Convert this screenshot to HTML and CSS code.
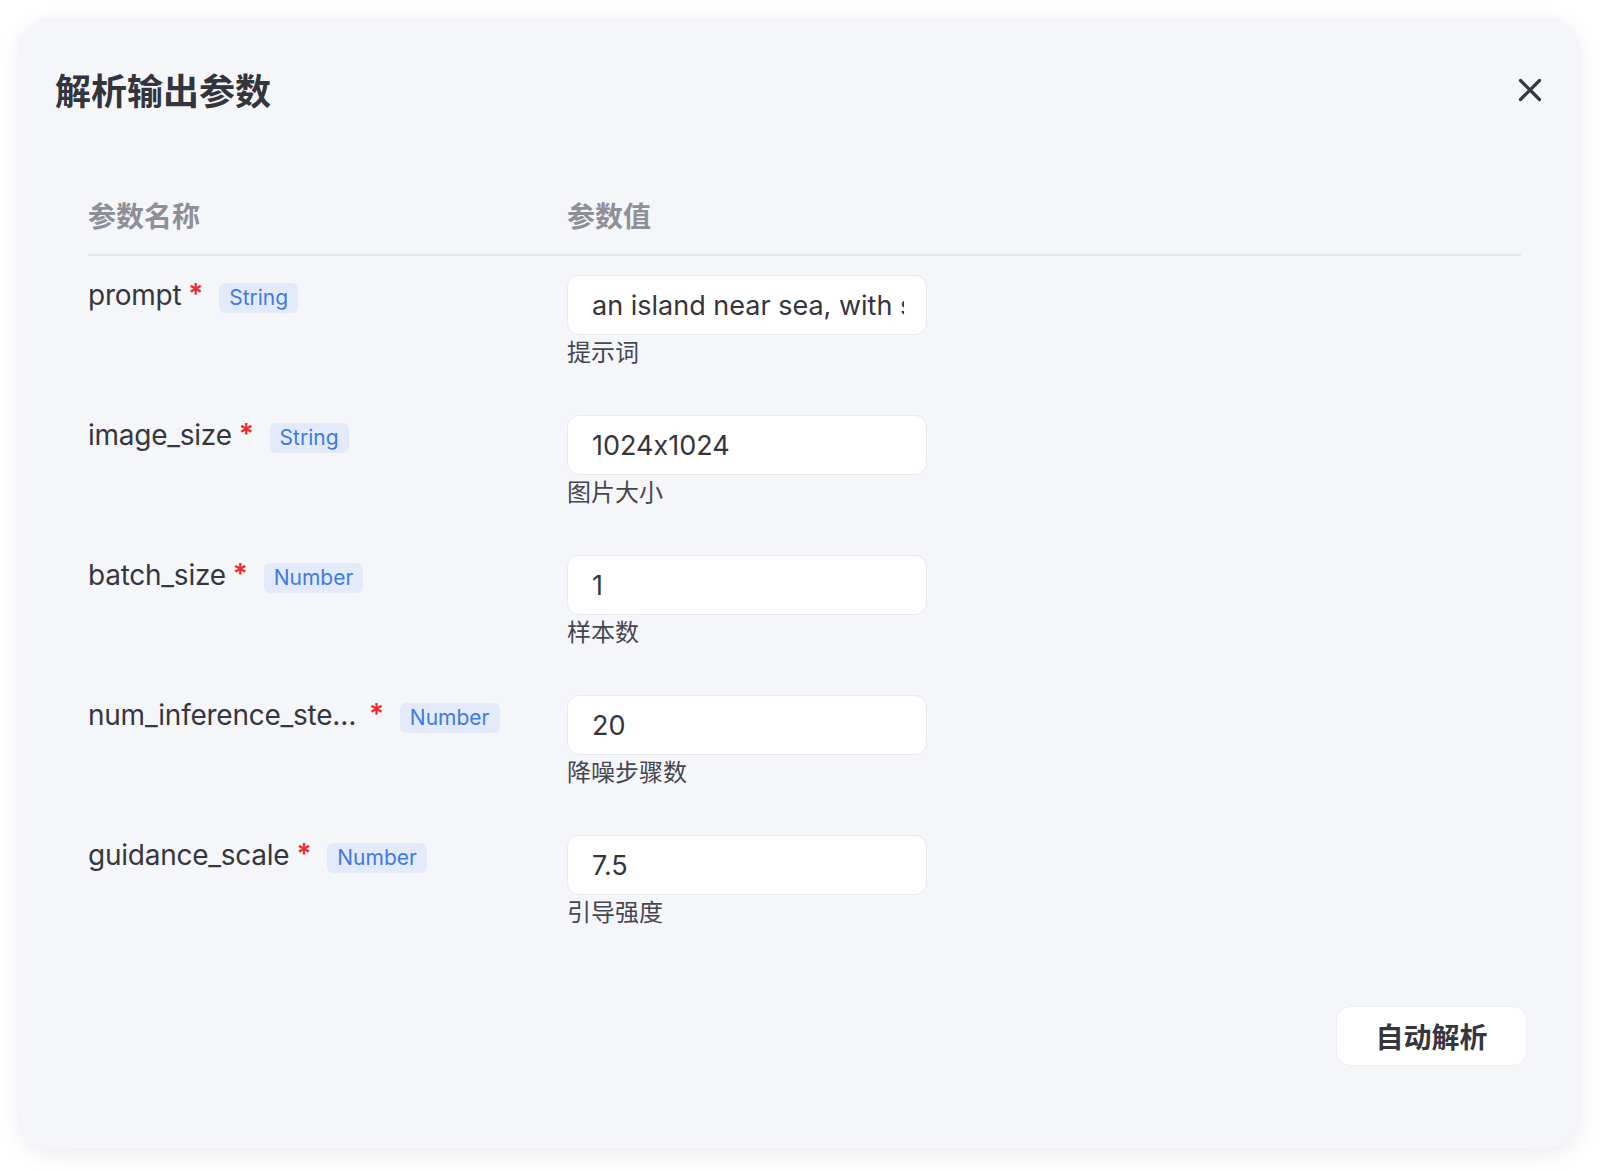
FILE: index.html
```html
<!DOCTYPE html>
<html lang="zh-CN">
<head>
<meta charset="utf-8">
<title>解析输出参数</title>
<link rel="stylesheet" href="styles.css">
</head>
<body>
<div class="page">
  <div class="dialog">
    <div class="dialog-head">
      <h1 class="dialog-title">解析输出参数</h1>
      <button class="close-btn" aria-label="关闭">
        <svg width="24" height="24" viewBox="0 0 24 24"><path d="M2.5 2.5 L21.5 21.5 M21.5 2.5 L2.5 21.5" fill="none" stroke="#383843" stroke-width="3.2" stroke-linecap="round"/></svg>
      </button>
    </div>

    <div class="table">
      <div class="thead">
        <div>参数名称</div>
        <div>参数值</div>
      </div>
      <div class="tbody">
        <div class="row">
          <div class="name-cell"><span class="name">prompt</span><span class="req">*</span><span class="tag">String</span></div>
          <div class="value-cell"><input class="field" value="an island near sea, with sky and clouds"><div class="hint">提示词</div></div>
        </div>
        <div class="row">
          <div class="name-cell"><span class="name">image_size</span><span class="req">*</span><span class="tag">String</span></div>
          <div class="value-cell"><input class="field" value="1024x1024"><div class="hint">图片大小</div></div>
        </div>
        <div class="row">
          <div class="name-cell"><span class="name">batch_size</span><span class="req">*</span><span class="tag">Number</span></div>
          <div class="value-cell"><input class="field" value="1"><div class="hint">样本数</div></div>
        </div>
        <div class="row">
          <div class="name-cell"><span class="name name-long">num_inference_steps</span><span class="req req-long">*</span><span class="tag">Number</span></div>
          <div class="value-cell"><input class="field" value="20"><div class="hint">降噪步骤数</div></div>
        </div>
        <div class="row">
          <div class="name-cell"><span class="name">guidance_scale</span><span class="req">*</span><span class="tag">Number</span></div>
          <div class="value-cell"><input class="field" value="7.5"><div class="hint">引导强度</div></div>
        </div>
      </div>
    </div>

    <div class="dialog-foot">
      <button class="btn">自动解析</button>
    </div>
  </div>
</div>
</body>
</html>
```

FILE: styles.css
```css
* { box-sizing: border-box; }
html, body { margin: 0; padding: 0; background: #ffffff; }
body {
  font-family: Inter, "Noto Sans CJK SC", sans-serif;
  font-feature-settings: "calt" 0;
  color: #36363f;
}
.page {
  padding: 18px 21px 21px 19px;
}
.dialog {
  width: 1561px;
  height: 1131px;
  background: #f5f6fa;
  border-radius: 32px;
  box-shadow: 0 6px 26px rgba(0, 0, 0, 0.07), 0 0 2px rgba(0, 0, 0, 0.04);
  padding: 46px 38px 0 36px;
  display: flex;
  flex-direction: column;
}
.dialog-head {
  display: flex;
  align-items: center;
  justify-content: space-between;
  height: 50px;
}
.dialog-title {
  margin: 0;
  font-family: "Noto Sans CJK SC", sans-serif;
  font-size: 36px;
  line-height: 50px;
  font-weight: 700;
  color: #34343c;
}
.close-btn {
  border: 0;
  background: none;
  padding: 0;
  width: 24px;
  height: 24px;
  display: flex;
  margin-top: 2px;
}
.table {
  margin: 83px 21px 0 33px;
}
.thead {
  display: grid;
  grid-template-columns: 479px 1fr;
  font-size: 28px;
  line-height: 40px;
  font-weight: 600;
  color: #8e8f97;
  padding-bottom: 17px;
  border-bottom: 2px solid #e6e7eb;
}
.tbody {
  padding-top: 19px;
}
.row {
  display: grid;
  grid-template-columns: 479px 1fr;
  padding-bottom: 45px;
}
.name-cell {
  display: flex;
  align-items: flex-start;
  font-size: 28px;
  line-height: 40px;
  letter-spacing: -0.25px;
  color: #36363f;
}
.name {
  white-space: nowrap;
}
.name-long {
  max-width: 272px;
  overflow: hidden;
  text-overflow: ellipsis;
}
.req {
  color: #ee2b2b;
  margin-left: 7px;
  font-weight: 600;
  position: relative;
  top: -1px;
}
.req-long {
  margin-left: 9px;
}
.tag {
  margin-left: 16px;
  margin-top: 8px;
  height: 30px;
  padding: 0 10px;
  border-radius: 6px;
  background: #e3ebfa;
  color: #3f7ae0;
  font-size: 21px;
  line-height: 30px;
  letter-spacing: 0;
}
.value-cell {
  display: flex;
  flex-direction: column;
  align-items: flex-start;
}
.field {
  width: 360px;
  height: 60px;
  border: 1.5px solid #e9eaee;
  border-radius: 12px;
  background: #ffffff;
  padding: 0 22px 0 24px;
  font-family: Inter, "Noto Sans CJK SC", sans-serif;
  font-feature-settings: "calt" 0;
  font-size: 27px;
  color: #35353d;
  outline: none;
}
.hint {
  margin-top: 1px;
  font-size: 24px;
  line-height: 34px;
  color: #46464f;
}
.dialog-foot {
  display: flex;
  justify-content: flex-end;
  margin: 31px 15px 0 0;
}
.btn {
  width: 191px;
  height: 60px;
  border: 1.5px solid #eceef1;
  border-radius: 14px;
  background: #ffffff;
  font-family: "Noto Sans CJK SC", sans-serif;
  font-size: 28px;
  font-weight: 700;
  color: #36363e;
  padding: 0;
}
```
